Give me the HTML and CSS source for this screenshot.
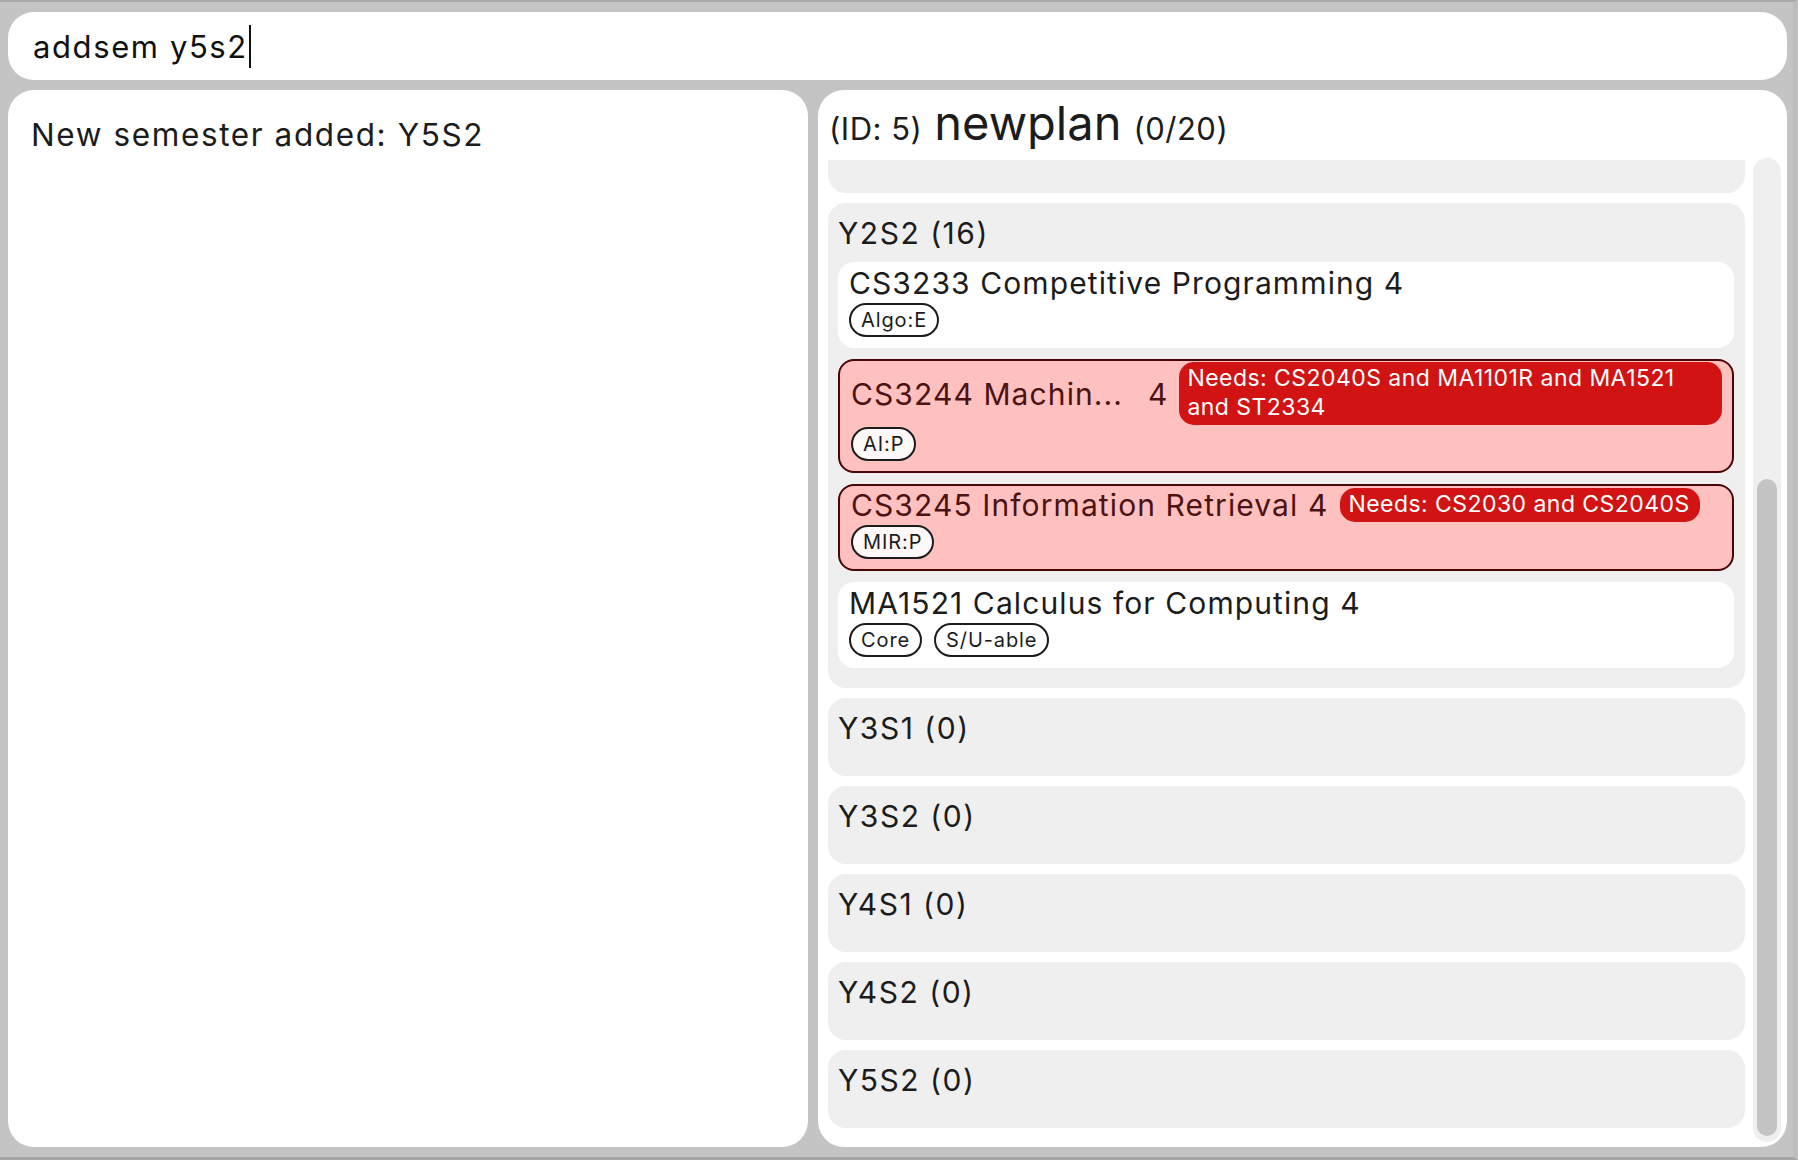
FILE: index.html
```html
<!DOCTYPE html>
<html>
<head>
<meta charset="utf-8">
<link rel="stylesheet" href="styles.css">
</head>
<body>
<div class="window">
  <div class="cmd"><span class="cmd-text">addsem y5s2</span><span class="caret"></span></div>
  <div class="main">
    <div class="result">New semester added: Y5S2</div>
    <div class="plan">
      <div class="plan-head"><span class="pid">(ID: 5)</span><span class="pname">newplan</span><span class="pcred">(0/20)</span></div>
      <div class="plan-body">
        <div class="viewport">
          <div class="sem-list">
            <div class="sem"><div class="sem-label">Y2S1 (0)</div></div>
            <div class="sem">
              <div class="sem-label">Y2S2 (16)</div>
              <div class="mods">
                <div class="mod">
                  <div class="mod-row"><span class="mod-title">CS3233 Competitive Programming 4</span></div>
                  <div class="tags"><span class="tag">Algo:E</span></div>
                </div>
                <div class="mod bad">
                  <div class="mod-row"><span class="mod-title">CS3244 Machin...</span><span class="mod-cred">4</span><span class="needs">Needs: CS2040S and MA1101R and MA1521 and ST2334</span></div>
                  <div class="tags"><span class="tag">AI:P</span></div>
                </div>
                <div class="mod bad">
                  <div class="mod-row"><span class="mod-title">CS3245 Information Retrieval 4</span><span class="needs">Needs: CS2030 and CS2040S</span></div>
                  <div class="tags"><span class="tag">MIR:P</span></div>
                </div>
                <div class="mod">
                  <div class="mod-row"><span class="mod-title">MA1521 Calculus for Computing 4</span></div>
                  <div class="tags"><span class="tag">Core</span><span class="tag">S/U-able</span></div>
                </div>
              </div>
            </div>
            <div class="sem"><div class="sem-label">Y3S1 (0)</div></div>
            <div class="sem"><div class="sem-label">Y3S2 (0)</div></div>
            <div class="sem"><div class="sem-label">Y4S1 (0)</div></div>
            <div class="sem"><div class="sem-label">Y4S2 (0)</div></div>
            <div class="sem"><div class="sem-label">Y5S2 (0)</div></div>
          </div>
        </div>
        <div class="track"><div class="thumb"></div></div>
      </div>
    </div>
  </div>
</div>
</body>
</html>
```
FILE: styles.css
```css
* { box-sizing: border-box; }
html, body { margin: 0; padding: 0; }
body {
  width: 1798px;
  height: 1160px;
  background: #c4c4c4;
  font-family: "Inter", "Liberation Sans", sans-serif;
  color: #1c1c1c;
  overflow: hidden;
}
.window {
  height: 1160px;
  border-top: 2px solid #a9a9a9;
  border-bottom: 3px solid #a6a6a6;
  border-right: 5px solid #bdbdbd;
  padding: 10px 6px 0 8px;
  display: flex;
  flex-direction: column;
  gap: 10px;
}
.cmd {
  height: 68px;
  background: #fff;
  border-radius: 26px;
  display: flex;
  align-items: center;
  padding-left: 25px;
  font-size: 31px;
  letter-spacing: 1.6px;
}
.cmd-text { color: #111; }
.caret {
  width: 2px;
  height: 43px;
  background: #111;
  margin-left: 1px;
}
.main {
  height: 1057px;
  display: flex;
  gap: 10px;
}
.result {
  width: 800px;
  background: #fff;
  border-radius: 26px;
  padding: 27px 0 0 23px;
  font-size: 31.5px;
  line-height: 36px;
  letter-spacing: 1.6px;
}
.plan {
  flex: 1;
  background: #fff;
  border-radius: 26px;
  display: flex;
  flex-direction: column;
  padding: 0 6px 5px 10px;
}
.plan-head {
  height: 70px;
  display: flex;
  align-items: baseline;
  padding: 5px 0 0 1px;
  gap: 12px;
}
.pid, .pcred { font-size: 31px; letter-spacing: 0.5px; }
.pname { font-size: 47px; line-height: 56px; }
.plan-body {
  flex: 1;
  display: flex;
  gap: 8px;
  min-height: 0;
}
.viewport {
  flex: 1;
  overflow: hidden;
}
.sem-list {
  margin-top: -45px;
  display: flex;
  flex-direction: column;
  gap: 10px;
}
.sem {
  background: #efefef;
  border-radius: 18px;
  padding: 12px 11px 20px 10px;
  min-height: 78px;
}
.sem-label {
  font-size: 30px;
  line-height: 36px;
  letter-spacing: 1.5px;
}
.mods {
  display: flex;
  flex-direction: column;
  gap: 11px;
  margin-top: 11px;
}
.mod {
  background: #fff;
  border-radius: 16px;
  padding: 3px 11px 11px 11px;
}
.mod.bad {
  background: #ffc0c0;
  border: 2px solid #4a0505;
  padding: 1px 10px 10px 11px;
  color: #4d1212;
}
.mod-row {
  display: flex;
  align-items: center;
  min-height: 36px;
}
.mod-title {
  font-size: 30px;
  line-height: 36px;
  letter-spacing: 1.1px;
  white-space: nowrap;
  flex-shrink: 0;
}
.mod-cred {
  font-size: 30px;
  line-height: 36px;
  margin-left: 25px;
  flex-shrink: 0;
}
.needs {
  margin-left: 12px;
  background: #d11313;
  color: #fff;
  font-size: 23px;
  line-height: 29px;
  letter-spacing: 0.45px;
  padding: 2px 10px 3px 8px;
  border-radius: 15px;
  min-width: 0;
}
.tags {
  display: flex;
  gap: 12px;
  margin-top: 2px;
}
.tag {
  height: 34px;
  display: inline-flex;
  align-items: center;
  padding: 0 10px;
  border: 2px solid #1c1c1c;
  border-radius: 17px;
  background: #fff;
  font-size: 20px;
  letter-spacing: 0.9px;
  color: #1c1c1c;
}
.mod.bad .tag { background: #fff8f8; }
.track {
  width: 28px;
  margin-top: -2px;
  background: #efefef;
  border-radius: 14px;
  padding: 321px 4px 6px 4px;
  display: flex;
}
.thumb {
  flex: 1;
  background: #c4c4c4;
  border-radius: 10px;
}
```
